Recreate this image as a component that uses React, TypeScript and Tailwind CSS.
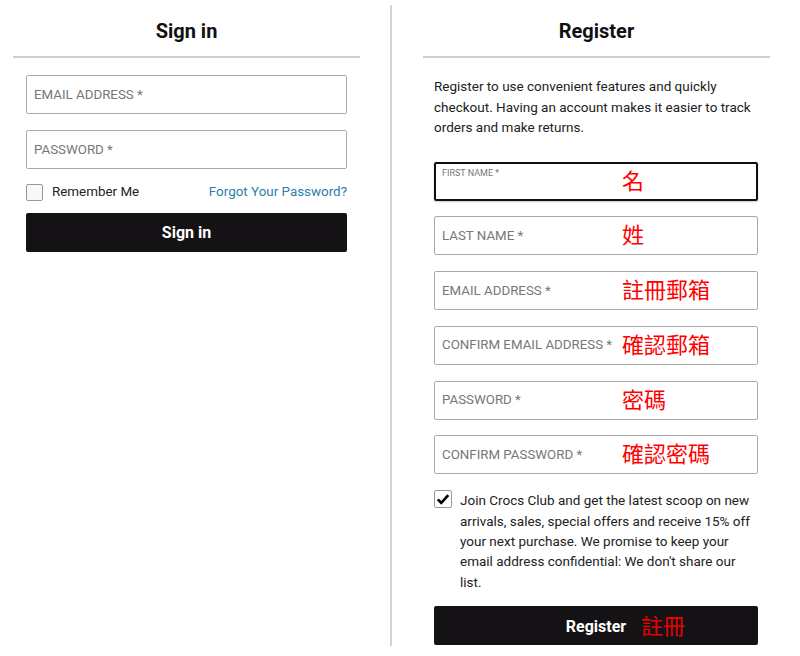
import React from "react";

// ─── Helpers ─────────────────────────────────────────

const FONT = "font-['Roboto','Liberation_Sans',sans-serif]";
const CJK = "font-['Noto_Sans_CJK_TC','Noto_Sans_CJK_SC',serif]";

function Field({
  label,
  note,
  focused = false,
}: {
  label: string;
  note?: string;
  focused?: boolean;
}) {
  if (focused) {
    return (
      <div className="relative h-[39px] rounded-[2px] border-2 border-[#111] shadow-[0_1px_2px_rgba(0,0,0,0.2)]">
        <span className="absolute left-[6px] top-[3px] text-[9px] text-[#777]">{label}</span>
        {note && (
          <span className={`absolute left-[186px] top-[1px] text-[22px] leading-[28px] text-[#f00] ${CJK}`}>
            {note}
          </span>
        )}
      </div>
    );
  }
  return (
    <div className="relative flex h-[39px] items-center rounded-[2px] border border-[#aaa] px-[7px]">
      <span className="text-[13.3px] text-[#777]">{label}</span>
      {note && (
        <span className={`absolute left-[187px] top-[2px] text-[22px] leading-[28px] text-[#f00] ${CJK}`}>
          {note}
        </span>
      )}
    </div>
  );
}

function Heading({ text }: { text: string }) {
  return (
    <div className="flex h-[58px] items-center justify-center border-b-2 border-[#d0d0d0] pt-[5px]">
      <h2 className="text-[20px] font-bold text-[#111]">{text}</h2>
    </div>
  );
}

// ─── Columns ─────────────────────────────────────────

function SignIn() {
  return (
    <div className="w-[390px] shrink-0">
      <div className="ml-[13px] mr-[30px]">
        <Heading text="Sign in" />
      </div>
      <div className="ml-[26px] mr-[43px] mt-[17px] flex flex-col">
        <Field label="EMAIL ADDRESS *" />
        <div className="mt-[16px]">
          <Field label="PASSWORD *" />
        </div>
        <div className="mt-[13px] flex items-center justify-between">
          <label className="flex items-center gap-[9px]">
            <span className="h-[17px] w-[17px] rounded-[2px] border border-[#999] bg-[#f8f8f8]" />
            <span className="text-[13.4px] text-[#222]">Remember Me</span>
          </label>
          <a className="text-[13.4px] text-[#2a7fa8]">Forgot Your Password?</a>
        </div>
        <button className="mt-[11px] h-[39px] rounded-[2px] bg-[#141214] pt-[1px] text-[16px] font-bold text-white">
          Sign in
        </button>
      </div>
    </div>
  );
}

function Register() {
  const fields = [
    { label: "LAST NAME *", note: "姓" },
    { label: "EMAIL ADDRESS *", note: "註冊郵箱" },
    { label: "CONFIRM EMAIL ADDRESS *", note: "確認郵箱" },
    { label: "PASSWORD *", note: "密碼" },
    { label: "CONFIRM PASSWORD *", note: "確認密碼" },
  ];
  return (
    <div className="flex-1">
      <div className="ml-[31px] mr-[30px]">
        <Heading text="Register" />
      </div>
      <div className="ml-[42px] mr-[42px] flex flex-col">
        <p className="mt-[18px] text-[13.5px] leading-[20.5px] text-[#222]">
          Register to use convenient features and quickly checkout. Having an account makes it easier to track
          orders and make returns.
        </p>
        <div className="mt-[24px] flex flex-col gap-[15.8px]">
          <Field label="FIRST NAME *" note="名" focused />
          {fields.map((f) => (
            <Field key={f.label} label={f.label} note={f.note} />
          ))}
        </div>
        <div className="mt-[15px] flex items-start gap-[8px]">
          <span className="mt-[1px] flex h-[18px] w-[18px] shrink-0 items-center justify-center rounded-[2px] border border-[#999] bg-white">
            <svg viewBox="0 0 16 16" className="h-[14px] w-[14px]">
              <path d="M2 8.5 L6 12.5 L14 3.5" fill="none" stroke="#000" strokeWidth="3" />
            </svg>
          </span>
          <p className="mt-[1px] text-[13.5px] leading-[20.3px] text-[#222]">
            Join Crocs Club and get the latest scoop on new arrivals, sales, special offers and receive 15% off
            your next purchase. We promise to keep your email address confidential: We don't share our list.
          </p>
        </div>
        <button className="relative mt-[14px] h-[39px] rounded-[2px] bg-[#141214] pt-[3px] text-[16px] font-bold text-white">
          Register
          <span className={`absolute left-[207px] top-[4px] text-[22px] font-normal leading-[28px] text-[#e00] ${CJK}`}>
            註冊
          </span>
        </button>
      </div>
    </div>
  );
}

export default function App() {
  return (
    <div className={`flex h-[656px] w-[800px] bg-white ${FONT}`}>
      <SignIn />
      <div className="mb-[10px] mt-[5px] w-[2px] shrink-0 bg-[#d4d4d4]" />
      <Register />
    </div>
  );
}
